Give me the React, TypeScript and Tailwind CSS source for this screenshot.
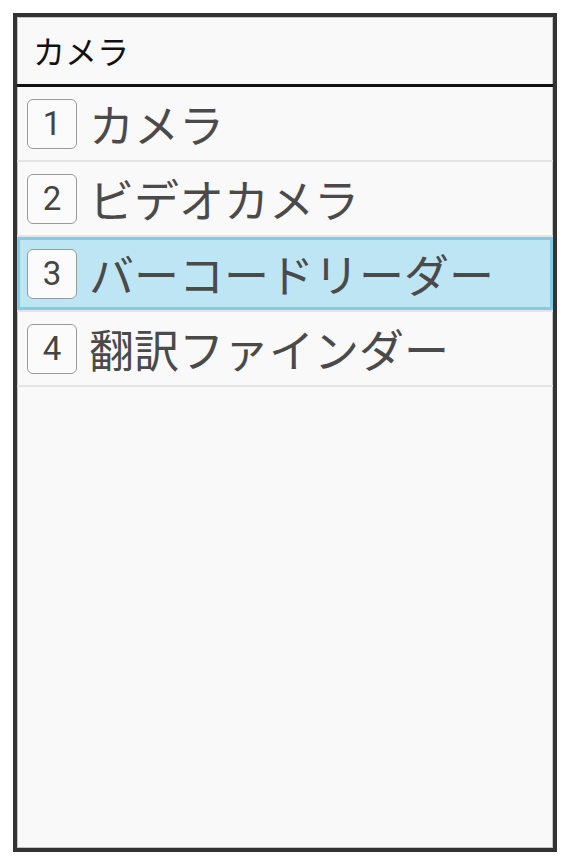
const items = [
  { key: '1', label: 'カメラ' },
  { key: '2', label: 'ビデオカメラ' },
  { key: '3', label: 'バーコードリーダー', selected: true },
  { key: '4', label: '翻訳ファインダー' },
]

const jp = { fontFamily: '"Noto Sans CJK JP", "Noto Sans", sans-serif' }

export default function App() {
  return (
    <div className="w-[570px] h-[864px] bg-white pt-[13px] pl-[13px]" style={jp}>
      <div className="w-[544px] h-[839px] border-4 border-[#333] bg-[#f9f9f9] shadow-[inset_0_0_0_1px_#c4c4c4] flex flex-col">
        {/* Header */}
        <div className="h-[70px] shrink-0 border-b-[3px] border-[#111] flex items-center pl-[16px] pb-[2px]">
          <span className="text-[32px] leading-none text-[#111]">カメラ</span>
        </div>

        {/* Menu list */}
        <ul className="flex flex-col">
          {items.map(({ key, label, selected }) => (
            <li key={key} className="h-[75px] border-b-2 border-[#e4e4e4]">
              <div
                className={`h-full flex items-center pl-[10px] ${
                  selected ? 'bg-[#bee5f3] border-[3px] border-[#80cdea]' : ''
                }`}
              >
                <div
                  className={`w-[50px] h-[50px] shrink-0 rounded-[6px] border-[1.5px] border-[#9a9a9a] bg-[#fbfbfb] flex items-center justify-center text-[33px] leading-none text-[#444] ${
                    selected ? '-ml-[3px]' : ''
                  }`}
                  style={{ fontFamily: 'Roboto, "Noto Sans", sans-serif' }}
                >
                  {key}
                </div>
                <span className="ml-[12px] text-[45px] leading-none text-[#4a4a4a] whitespace-nowrap">
                  {label}
                </span>
              </div>
            </li>
          ))}
        </ul>
      </div>
    </div>
  )
}
